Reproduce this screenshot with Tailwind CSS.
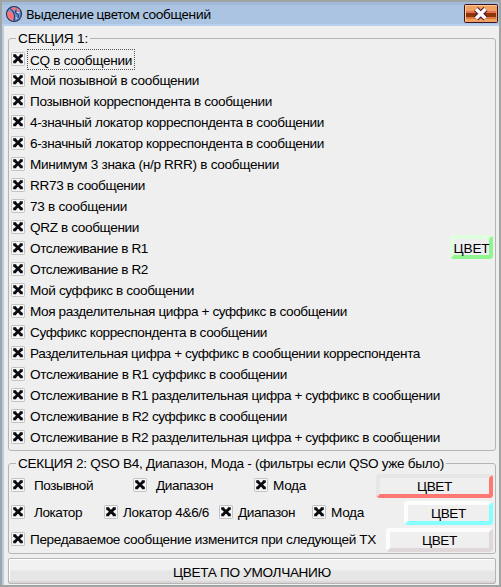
<!DOCTYPE html>
<html lang="ru">
<head>
<meta charset="utf-8">
<title>Выделение цветом сообщений</title>
<script src="https://cdn.jsdelivr.net/npm/@tailwindcss/browser@4"></script>
</head>
<body class="w-[501px] h-[587px] overflow-hidden bg-[#a0a5a3] pt-[2px] pl-[2px] font-['Liberation_Sans',Arial,sans-serif] text-[13.6px] text-black">
<svg class="hidden">
  <symbol id="check" viewBox="0 0 14 14">
    <rect x=".5" y=".5" width="13" height="13" rx=".7" fill="#f8f8f8" stroke="#c2c2c2"/>
    <path d="M3.500 3.500 10.500 10M10.500 3.500 3.500 10" stroke="#0b0b12" stroke-width="3"/>
    <path d="M2.200 3.500h3M8.800 3.500h3M2.200 10h3M8.800 10h3" stroke="#0b0b12" stroke-width="2.600"/>
  </symbol>
</svg>
<main class="flex flex-col w-[497px] h-[583px] bg-[#b4cde9]">
  <header class="flex items-center h-[24px] shrink-0 pl-[3px] pr-[1px] bg-[#aac4e1] border-t-[3px] border-t-[#a1bbd8] border-b-[2px] border-b-[#b9d1ee]">
    <svg class="w-[18px] h-[18px] shrink-0 -mt-[2px]" viewBox="0 0 18 18">
      <circle cx="9" cy="9" r="7.5" fill="#5d93d0" stroke="#302d58" stroke-width="1.2"/>
      <path d="M2 8Q3 5.500 5.500 6.500L8 8.500 9 11.500 8 15.500Q5 15 3 12.500ZM6 3.500 9.500 2 11 4 8.500 6ZM12 2.800 15 5 13.500 7.500 11.800 6Z" fill="#ff7476"/>
      <path d="M5.500 3.500 8.500 7 9.500 11 9 16M11 5 10.500 8 13.500 10 13 13" stroke="#35325e" stroke-width="1" fill="none"/>
      <path d="M12 7.500h2.500M11 12l1 2" stroke="#c5d7ee" stroke-width="1" fill="none"/>
    </svg>
    <h1 class="ml-[3px] -mt-[2px] font-['Noto_Sans','Open_Sans',sans-serif] text-[13px] leading-[18px] whitespace-nowrap" data-font="13px 'Noto Sans'" data-width="185"><span>Выделение цветом сообщений</span></h1>
    <button class="ml-auto -mt-[3px] w-[34px] h-[19px] shrink-0" aria-label="Закрыть">
      <svg class="block" width="34" height="19" viewBox="0 0 34 19">
        <rect x=".5" y=".5" width="33" height="18" rx="1" fill="#efa160" stroke="#3d1028"/>
        <path d="M1.5 17V1.5H32" stroke="#ffc98d" fill="none"/>
        <path d="M2 8h30" stroke="#e8705a" stroke-width="2"/>
        <path d="M2 11h30" stroke="#8d3507" stroke-width="4"/>
        <path d="M2 14h30" stroke="#dc7a3c" stroke-width="2"/>
        <path d="m12 5 9.500 9.500m0-9.500-9.500 9.500" stroke="#401330" stroke-width="5.600"/>
        <path d="m12 5 9.500 9.500m0-9.500-9.500 9.500" stroke="#fff8f8" stroke-width="3.600"/>
      </svg>
    </button>
  </header>
  <div class="flex flex-col grow ml-[2px] bg-[#efefef] pl-[4px] pr-[3px] pt-[5px]">
    <fieldset class="flex flex-col h-[420px] shrink-0 border border-[#b5b5b5] rounded-[3px] pl-[2px]">
      <legend class="ml-[5px] px-[2px] h-[15px] leading-[15px] whitespace-nowrap" data-width="70"><span>СЕКЦИЯ 1:</span></legend>
      <div class="flex items-center">
        <div class="flex flex-col pt-[2px]" id="messages"></div>
        <button class="ml-auto mr-[2px] w-[43px] h-[24px] shrink-0 rounded-[4px] border-[4px] border-t-[#dfffdf] border-l-[#dfffdf] border-r-[#8ff58f] border-b-[#8ff58f] bg-[#efefef] flex items-center justify-center leading-[14px]"><b class="pt-[4px] font-normal whitespace-nowrap" data-width="36"><span>ЦВЕТ</span></b></button>
      </div>
    </fieldset>
    <fieldset class="flex flex-col h-[98px] mt-[5px] shrink-0 border border-[#b5b5b5] rounded-[3px] pl-[2px] pt-px">
      <legend class="ml-[5px] px-[2px] h-[15px] leading-[15px] whitespace-nowrap" data-width="426"><span>СЕКЦИЯ 2: QSO B4, Диапазон, Мода - (фильтры если QSO уже было)</span></legend>
      <div class="grid grid-cols-[122px_121px_122px_117px] h-[27px] items-center">
        <label class="flex items-center"><svg class="w-[14px] h-[14px]"><use href="#check"/></svg><b class="ml-[9px] mt-[2px] font-normal whitespace-nowrap" data-width="59"><span>Позывной</span></b></label>
        <label class="flex items-center"><svg class="w-[14px] h-[14px]"><use href="#check"/></svg><b class="ml-[9px] mt-[2px] font-normal whitespace-nowrap" data-width="57"><span>Диапазон</span></b></label>
        <label class="flex items-center"><svg class="w-[14px] h-[14px]"><use href="#check"/></svg><b class="ml-[5px] mt-[2px] font-normal whitespace-nowrap" data-width="33"><span>Мода</span></b></label>
        <button class="w-[117px] h-[24px] rounded-[4px] border-[4px] border-t-[#e6e6e6] border-l-[#e6e6e6] border-r-[#ff7772] border-b-[#ff7772] flex items-center justify-center leading-[14px]"><b class="pt-[2px] font-normal whitespace-nowrap" data-width="35"><span>ЦВЕТ</span></b></button>
      </div>
      <div class="grid grid-cols-[93px_115px_93px_92px_89px] h-[27px] items-center">
        <label class="flex items-center"><svg class="w-[14px] h-[14px]"><use href="#check"/></svg><b class="ml-[9px] mt-[2px] font-normal whitespace-nowrap" data-width="48"><span>Локатор</span></b></label>
        <label class="flex items-center"><svg class="w-[14px] h-[14px]"><use href="#check"/></svg><b class="ml-[5px] mt-[2px] font-normal whitespace-nowrap" data-width="86"><span>Локатор 4&amp;6/6</span></b></label>
        <label class="flex items-center"><svg class="w-[14px] h-[14px]"><use href="#check"/></svg><b class="ml-[5px] mt-[2px] font-normal whitespace-nowrap" data-width="57"><span>Диапазон</span></b></label>
        <label class="flex items-center"><svg class="w-[14px] h-[14px]"><use href="#check"/></svg><b class="ml-[5px] mt-[2px] font-normal whitespace-nowrap" data-width="33"><span>Мода</span></b></label>
        <button class="w-[89px] h-[24px] rounded-[4px] border-[4px] border-t-[#fdfdfd] border-l-[#fdfdfd] border-r-[#86ffff] border-b-[#86ffff] flex items-center justify-center leading-[14px]"><b class="pt-[2px] font-normal whitespace-nowrap" data-width="35"><span>ЦВЕТ</span></b></button>
      </div>
      <div class="grid grid-cols-[375px_107px] h-[27px] items-center">
        <label class="flex items-center"><svg class="w-[14px] h-[14px]"><use href="#check"/></svg><b class="ml-[5px] mt-[2px] font-normal whitespace-nowrap" data-width="346"><span>Передаваемое сообщение изменится при следующей TX</span></b></label>
        <button class="w-[107px] h-[24px] rounded-[4px] border-[4px] border-t-[#fdfdfd] border-l-[#fdfdfd] border-r-[#dfd7d9] border-b-[#dfd7d9] flex items-center justify-center leading-[14px]"><b class="pt-[2px] font-normal whitespace-nowrap" data-width="35"><span>ЦВЕТ</span></b></button>
      </div>
    </fieldset>
    <button class="mt-[4px] pt-[3px] h-[26px] shrink-0 rounded-[2px] border border-[#b5b5b5] bg-linear-to-b from-[#f1f1f1] from-45% to-[#e6e6e6] to-50% shadow-[inset_0_-2px_0_#ddd6d8,inset_1px_1px_0_#fff] flex items-center justify-center leading-[16px]"><b class="font-normal whitespace-nowrap" data-width="158"><span>ЦВЕТА ПО УМОЛЧАНИЮ</span></b></button>
  </div>
</main>
<script>
const messages = [
  ["CQ в сообщении", 102], ["Мой позывной в сообщении", 169],
  ["Позывной корреспондента в сообщении", 242], ["4-значный локатор корреспондента в сообщении", 294],
  ["6-значный локатор корреспондента в сообщении", 294], ["Минимум 3 знака (н/р RRR) в сообщении", 249],
  ["RR73 в сообщении", 115], ["73 в сообщении", 97], ["QRZ в сообщении", 109],
  ["Отслеживание в R1", 118], ["Отслеживание в R2", 118], ["Мой суффикс в сообщении", 164],
  ["Моя разделительная цифра + суффикс в сообщении", 317], ["Суффикс корреспондента в сообщении", 237],
  ["Разделительная цифра + суффикс в сообщении корреспондента", 390],
  ["Отслеживание в R1 суффикс в сообщении", 257],
  ["Отслеживание в R1 разделительная цифра + суффикс в сообщении", 410],
  ["Отслеживание в R2 суффикс в сообщении", 257],
  ["Отслеживание в R2 разделительная цифра + суффикс в сообщении", 410]
];
document.getElementById("messages").innerHTML = messages.map(([text, width], i) =>
  `<label class="flex items-center h-[21px]"><svg class="w-[14px] h-[14px] shrink-0"><use href="#check"/></svg><b class="${i ? 'ml-[2px] px-[3px] pt-[3px] leading-[18px] font-normal whitespace-nowrap' : 'ml-[2px] pl-[2px] pr-[2px] mt-[1px] h-[21px] leading-[21px] font-normal whitespace-nowrap border border-dotted border-[#555]'}" data-width="${width}"><span>${text}</span></b></label>`).join("");
const pen = document.createElement("canvas").getContext("2d");
document.querySelectorAll("[data-width]").forEach(el => {
  const span = el.firstElementChild;
  pen.font = el.dataset.font || "13.6px 'Liberation Sans'";
  const gap = (el.dataset.width - pen.measureText(span.textContent).width) / span.textContent.length;
  span.style.letterSpacing = gap + "px";
});
</script>
</body>
</html>
